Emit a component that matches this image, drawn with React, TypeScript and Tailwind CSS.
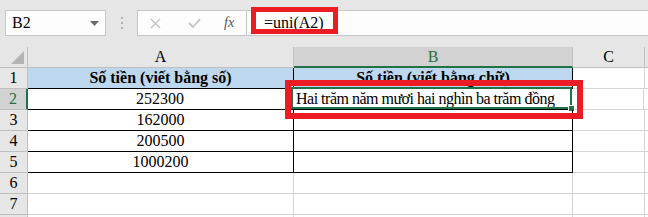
import React from "react";

const rows = [
  { n: 1, a: "Số tiền (viết bằng số)", b: "Số tiền (viết bằng chữ)", head: true },
  { n: 2, a: "252300", b: "Hai trăm năm mươi hai nghìn ba trăm đồng" },
  { n: 3, a: "162000", b: "" },
  { n: 4, a: "200500", b: "" },
  { n: 5, a: "1000200", b: "" },
  { n: 6, a: "", b: "", empty: true },
  { n: 7, a: "", b: "", empty: true },
  { n: 0, a: "", b: "", empty: true },
];

export default function App() {
  return (
    <div className="relative w-[648px] h-[217px] overflow-hidden bg-[#e6e6e6] text-black font-['Liberation_Serif','Times_New_Roman',serif]">
      {/* formula bar */}
      <div className="flex items-center h-[47px] pt-[10px] pb-[11px] pl-[5px]">
        <div className="flex items-center justify-between w-[101px] h-[26px] bg-[#fdfdfd] border border-[#c6c6c6] pl-[6px] pr-[6px]">
          <span className="text-[16px] leading-none">B2</span>
          <svg width="9" height="5" viewBox="0 0 9 5"><path d="M0 0h9L4.5 5z" fill="#6b6b6b" /></svg>
        </div>
        <div className="flex flex-col gap-[3px] w-[31px] items-center">
          <div className="w-[2px] h-[2px] bg-[#b3b3b3]" />
          <div className="w-[2px] h-[2px] bg-[#b3b3b3]" />
          <div className="w-[2px] h-[2px] bg-[#b3b3b3]" />
        </div>
        <div className="flex items-center w-[110px] h-[26px] bg-[#fdfdfd] border border-[#c6c6c6]">
          <svg className="ml-[12px]" width="11" height="11" viewBox="0 0 11 11"><path d="M1 1l9 9M10 1l-9 9" stroke="#c4c4c4" strokeWidth="1.4" /></svg>
          <svg className="ml-[27px]" width="13" height="10" viewBox="0 0 13 10"><path d="M1 5l4 4 7-8" stroke="#c4c4c4" strokeWidth="1.8" fill="none" /></svg>
          <span className="ml-[23px] italic text-[14px] text-[#555] leading-none">fx</span>
        </div>
        <div className="flex items-center flex-1 h-[26px] bg-[#fdfdfd] border-y border-[#c6c6c6] pl-[17px]">
          <span className="text-[16px] leading-none">=uni(A2)</span>
        </div>
      </div>

      {/* grid */}
      <div className="bg-white text-[16px]">
        <div className="flex h-[21px] bg-[#e6e6e6]">
          <div className="relative w-[28px] border-r border-b border-[#bfbfbf]">
            <svg className="absolute right-[3px] bottom-[3px]" width="13" height="13" viewBox="0 0 13 13"><path d="M13 0v13H0z" fill="#b4b4b4" /></svg>
          </div>
          <div className="w-[266px] border-r border-b border-[#bfbfbf] flex items-center justify-center">A</div>
          <div className="w-[279px] border-r border-b-2 border-[#bfbfbf] border-b-[#217346] bg-[#d2d2d2] flex items-center justify-center text-[#217346]">B</div>
          <div className="w-[72px] border-r border-b border-[#bfbfbf] flex items-center justify-center">C</div>
          <div className="flex-1 border-b border-[#bfbfbf]" />
        </div>
        {rows.map((r, i) => {
          const sel = r.n === 2;
          return (
            <div key={i} className="flex h-[21px]">
              <div
                className={
                  sel
                    ? "w-[28px] bg-[#d2d2d2] border-b border-[#bfbfbf] border-r-2 border-r-[#217346] text-[#217346] flex items-center justify-center"
                    : "w-[28px] bg-[#e6e6e6] border-b border-r border-[#bfbfbf] flex items-center justify-center"
                }
              >
                {r.n > 0 ? r.n : ""}
              </div>
              <div
                className={
                  (r.empty
                    ? "border-r border-b border-[#d4d4d4] "
                    : "border-r border-b border-black ") +
                  (r.head ? "bg-[#bdd7ee] font-bold " : "") +
                  (sel ? "w-[265px] " : "w-[266px] ") +
                  "flex items-center justify-center"
                }
              >
                {r.a}
              </div>
              <div
                className={
                  (r.empty
                    ? "border-r border-b border-[#d4d4d4] "
                    : "border-r border-b border-black ") +
                  (r.head ? "bg-[#bdd7ee] font-bold justify-center " : "justify-start pl-[3px] tracking-[-0.5px] ") +
                  "relative w-[279px] flex items-center whitespace-nowrap"
                }
              >
                {r.b}
                {sel && (
                  <div className="absolute left-[-2px] top-[-2px] w-[281px] h-[22px] border-2 border-[#217346]">
                    <div className="absolute right-[-5px] bottom-[-5px] w-[7px] h-[7px] bg-[#217346] border border-white" />
                  </div>
                )}
              </div>
              <div className="w-[72px] border-r border-b border-[#d4d4d4]" />
              <div className="flex-1 border-b border-[#d4d4d4]" />
            </div>
          );
        })}
      </div>

      {/* red annotations */}
      <div className="absolute left-[251px] top-[7px] w-[87px] h-[27px] border-[5px] border-[#ed1c24]" />
      <div className="absolute left-[285px] top-[80px] w-[298px] h-[39px] border-[6px] border-[#ed1c24]" />
    </div>
  );
}
